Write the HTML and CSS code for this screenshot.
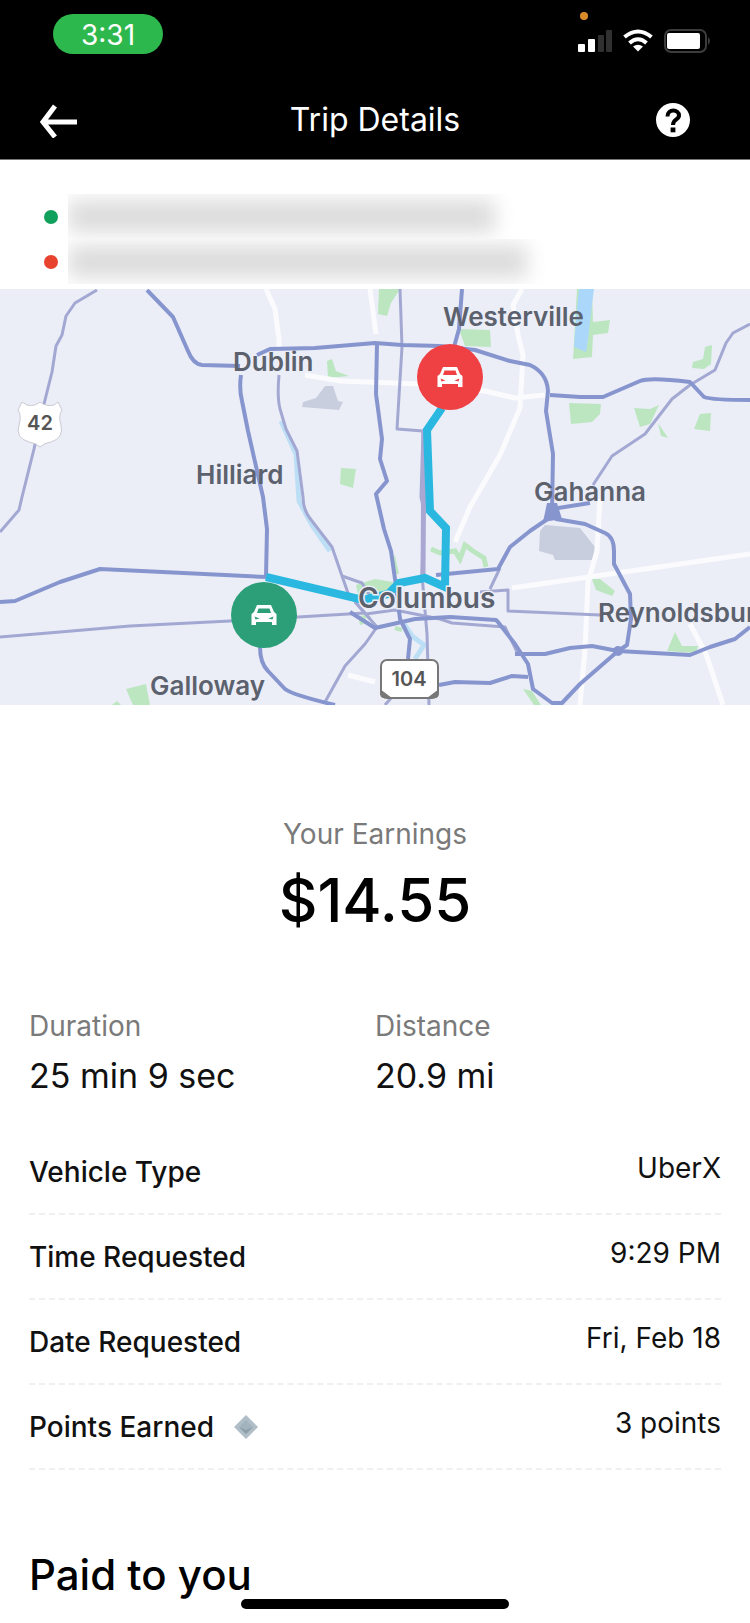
FILE: index.html
```html
<!DOCTYPE html>
<html lang="en">
<head>
<meta charset="UTF-8">
<meta name="viewport" content="width=device-width, initial-scale=1.0">
<title>Trip Details</title>
<link rel="stylesheet" href="styles.css">
</head>
<body>
<header class="top">
    <div class="status-bar">
        <span class="clock">3:31</span>
        <svg class="status-icons" width="138" height="46" viewBox="0 0 138 46" aria-hidden="true">
            <circle cx="9" cy="8" r="4" fill="#d98a2b"/>
            <g fill="#fff">
                <rect x="3" y="36" width="7" height="8" rx="1"/>
                <rect x="13" y="31" width="7" height="13" rx="1"/>
            </g>
            <g fill="#303030">
                <rect x="23" y="27" width="6" height="17" rx="1"/>
                <rect x="31" y="22" width="6" height="22" rx="1"/>
            </g>
            <g fill="none" stroke="#fff" stroke-width="4">
                <path d="M49.500 29Q63 18 76.500 29"/>
                <path d="M54.500 35Q63 27.500 71.500 35"/>
            </g>
            <path d="M58 38.500Q63 35 68 38.500L63 43.500Z" fill="#fff"/>
            <rect x="90" y="22" width="41" height="22" rx="6" fill="none" stroke="#3c3c3c" stroke-width="2"/>
            <rect x="92" y="25" width="33" height="16" rx="2" fill="#fff"/>
            <path d="M133 29q4 4 0 8z" fill="#3c3c3c"/>
        </svg>
    </div>
    <div class="nav-bar">
        <button type="button" class="icon-btn" aria-label="Back">
            <svg width="40" height="36" viewBox="0 0 40 36"><path d="M39 20H5M17 4L5 20L17 35" fill="none" stroke="#fff" stroke-width="5"/></svg>
        </button>
        <h1>Trip Details</h1>
        <button type="button" class="icon-btn help" aria-label="Help">
            <svg width="34" height="34" viewBox="0 0 34 34">
                <circle cx="17" cy="17" r="17" fill="#fff"/>
                <path d="M11.500 13.500C11.500 5.500 23 6 23 12.500C23 17 17 16 17 22" fill="none" stroke="#000" stroke-width="4"/>
                <rect x="14.600" y="24.500" width="4.800" height="4.800" fill="#000"/>
            </svg>
        </button>
    </div>
</header>

<ul class="stops">
    <li class="pickup"><span class="address"><span class="redacted short"></span></span></li>
    <li class="dropoff"><span class="address"><span class="redacted"></span></span></li>
</ul>

<svg class="map" viewBox="0 0 750 416" role="img" aria-label="Trip route map">
    <defs>
        <g id="car">
            <path fill="#fff" fill-rule="evenodd" d="M-7 -10H7L10 -3L12.500 -1V10H8V7H-8V10H-12.500V-1L-10 -3ZM-5.500 -6.500L-7 -2H7L5.500 -6.500ZM-9.500 1.500L-8.500 4.500L-4.500 3.500ZM9.500 1.500L8.500 4.500L4.500 3.500Z"/>
        </g>
    </defs>
    <rect width="750" height="416" fill="#ebeef7"/>

    <!-- parks -->
    <g fill="#bce6c0">
        <path d="M379 0H400L391 14L387 27L378 25Z"/>
        <path d="M327 72L332 70L336 82L349 87L328 89Z"/>
        <path d="M341 179L356 180L353 199L340 195Z"/>
        <path d="M459 40L490 41L491 58L465 57Z"/>
        <path d="M577 0H592L593 33L610 31L608 44L593 46L592 68L573 70Z"/>
        <path d="M569 114L601 115L600 125L592 133L571 135Z"/>
        <path d="M634 119L650 120L659 116L650 135L640 138Z"/>
        <path d="M658 134L668 149L661 147Z"/>
        <path d="M705 58L712 56L711 75L704 80L692 79L693 73L703 70Z"/>
        <path d="M700 125L711 124L710 142L694 140Z"/>
        <path d="M592 290L600 290L615 302L612 307L596 301Z"/>
        <path d="M667 362L675 343L682 357L698 357L696 364Z"/>
        <path d="M523 400L532 402L541 416H534Z"/>
        <path d="M126 400L146 395L150 416H133Z"/>
        <path d="M112 416L117 412L121 416Z"/>
        <path d="M356 296L375 290L393 293L391 303L358 306Z"/>
        <path d="M358 327L366 326L366 334L360 336Z"/>
    </g>
    <path d="M431 260L440 264L455 262L460 270L465 256L473 262L484 269L486 278" fill="none" stroke="#bce6c0" stroke-width="5"/>
    <path d="M393 267L397 285M395 339L402 341" fill="none" stroke="#bce6c0" stroke-width="4"/>

    <!-- airports -->
    <g fill="#c9cede">
        <path d="M325 97H333L338 112L343 113L339 121L302 118L303 113L316 109Z"/>
        <path d="M540 242L545 236L580 239L595 258L593 271H555L553 266L539 262Z"/>
    </g>

    <!-- water -->
    <path d="M579 0H594L592 15L588 50L586 63L574 58L577 20Z" fill="#abd8fa"/>
    <g fill="none" stroke="#bddff5" stroke-width="5" stroke-linejoin="round">
        <path d="M281 132L296 165L299 212L312 236L330 262"/>
        <path d="M404 335L412 347L424 356L415 370"/>
    </g>

    <!-- minor roads -->
    <g fill="none" stroke="#fbfbfe" stroke-width="5" stroke-linejoin="round">
        <path d="M266 0L275 20L279 50V60M305 86L340 92L420 95L485 102L515 109L545 106"/>
        <path d="M370 0L376 45M522 0L513 16L518 46L523 66L520 119L500 166L470 218L455 253"/>
        <path d="M512 299L750 265M600 210L597 262L588 293L585 360L580 416"/>
        <path d="M690 335L706 365L723 416M348 386L375 393"/>
    </g>

    <!-- secondary roads -->
    <g fill="none" stroke="#a3a8d3" stroke-width="3" stroke-linejoin="round">
        <path d="M97 1L75 14L66 27L62 46L56 57L52 83L44 115L34 160L22 208L19 221L0 243"/>
        <path d="M0 348L60 343L130 337L230 332L298 328L365 324"/>
        <path d="M279 86Q277 108 280 120L286 140L297 162L303 208Q303 222 312 232L332 258L342 287L348 304L370 330"/>
        <path d="M342 287L362 294L372 310M355 313L377 338"/>
        <path d="M400 0L402 58L397 140L423 142L421 208L424 222L422 286L427 345L429 416"/>
        <path d="M750 35L733 44L726 54L715 81L690 96L672 110L645 145L612 167L593 196"/>
        <path d="M480 303L508 301V322L600 326M490 300L500 279M366 325L395 321L440 330L452 334L505 338L518 365"/>
        <path d="M325 413L345 377L365 355L377 338M385 416L392 408"/>
    </g>
    <path d="M424 142L423 286" fill="none" stroke="#aaa8d2" stroke-width="5"/>

    <!-- highways -->
    <g fill="none" stroke="#8795cf" stroke-width="4" stroke-linejoin="round">
        <path d="M147 1L173 28L188 62Q193 75 202 76L240 77M257 66L270 60L315 59L375 54L402 56L440 57L475 61L510 72L530 76Q547 84 548 102L546 122L553 165L552 224"/>
        <path d="M241 86Q239 100 242 112L248 142L263 208L267 240L266 288M0 313L15 312L60 293L100 280L266 288"/>
        <path d="M377 55L376 105L382 150L380 170L387 192L376 205L384 240L391 262L395 290L400 330L410 350L408 370"/>
        <path d="M462 0L459 40L454 58M550 106L580 108H603L640 92Q650 88 690 93L704 108Q712 111 750 111"/>
        <path d="M436 286L498 280L510 258L530 242L552 227L556 230L585 235L605 244Q614 248 614 262V275L630 305L631 330L627 356L618 362L580 395L562 414H552L533 400L528 375L515 355L498 333L496 331L450 328L415 330L375 339L350 323"/>
        <path d="M515 365H545L570 359L592 357L618 362L690 366L710 358L735 350L750 338M552 220L590 214"/>
        <path d="M439 396L455 393L490 394L512 387L528 388M260 358Q260 374 268 382L285 400Q293 406 335 416"/>
    </g>
    <path d="M547 214H557L562 230L543 233Z" fill="#8795cf"/>
    <circle cx="618" cy="362" r="5" fill="#8795cf"/>

    <!-- route -->
    <path d="M442 119L427 141L430 222L446 239L445 298L425 289L399 294L388 305L363 311L266 288" fill="none" stroke="#2bb8e0" stroke-width="8"/>

    <!-- shields -->
    <path d="M22 113L27 116Q34 118 40 113Q46 118 54 116L58 113L62 121Q58 127 61 136Q64 149 51 153Q44 154 40 158Q36 154 29 153Q15 149 19 136Q22 127 18 121Z" fill="#fff" stroke="#c9c9d2" stroke-width="1"/>
    <rect x="381" y="371" width="57" height="38" rx="6" fill="#fff" stroke="#777" stroke-width="2"/>
    <path d="M380 400L392 409H384Q380 409 380 404ZM439 400L427 409H435Q439 409 439 404Z" fill="#777"/>

    <g class="map-labels">
        <text x="443" y="37">Westerville</text>
        <text x="233" y="82">Dublin</text>
        <text x="196" y="195">Hilliard</text>
        <text x="534" y="212">Gahanna</text>
        <text x="358" y="319" class="city">Columbus</text>
        <text x="598" y="333">Reynoldsbur</text>
        <text x="150" y="406">Galloway</text>
        <text x="40" y="141" class="shield">42</text>
        <text x="409" y="397" class="shield">104</text>
    </g>

    <circle cx="450" cy="88" r="33" fill="#ef4043"/>
    <use href="#car" x="450" y="88"/>
    <circle cx="264" cy="326" r="33" fill="#2c9f78"/>
    <use href="#car" x="264" y="326"/>
</svg>

<main>
    <section class="earnings">
        <h2>Your Earnings</h2>
        <p class="amount">$14.55</p>
    </section>

    <dl class="stats">
        <div>
            <dt>Duration</dt>
            <dd>25 min 9 sec</dd>
        </div>
        <div>
            <dt>Distance</dt>
            <dd>20.9 mi</dd>
        </div>
    </dl>

    <dl class="details">
        <div class="row">
            <dt>Vehicle Type</dt>
            <dd>UberX</dd>
        </div>
        <div class="row">
            <dt>Time Requested</dt>
            <dd>9:29 PM</dd>
        </div>
        <div class="row">
            <dt>Date Requested</dt>
            <dd>Fri, Feb 18</dd>
        </div>
        <div class="row">
            <dt>Points Earned
                <svg width="24" height="24" viewBox="0 0 24 24" aria-hidden="true">
                    <path d="M12 0L24 12L12 24L0 12Z" fill="#b0bec8"/>
                    <path d="M12 5L19 12L12 19L5 12Z" fill="#a3b3be"/>
                    <path d="M19 12L12 19L5 12L12 15Z" fill="#8c9faa"/>
                </svg>
            </dt>
            <dd>3 points</dd>
        </div>
    </dl>

    <h2 class="paid">Paid to you</h2>
</main>
<div class="home-indicator"></div>
</body>
</html>
```

FILE: styles.css
```css
* {
    box-sizing: border-box;
}

body {
    margin: 0;
    font-family: Inter, "Liberation Sans", sans-serif;
    font-size: 28px;
    line-height: 36px;
    color: #111;
    background-color: #fff;
}

h1, h2, p, dl, dd, ul {
    margin: 0;
    padding: 0;
    font-weight: 400;
}

.top {
    background-color: #000;
    color: #fff;
    border-bottom: 1px solid #777;
}

.status-bar {
    display: flex;
    justify-content: space-between;
    align-items: flex-start;
    padding: 8px 37px 0 53px;
}

.clock {
    width: 110px;
    height: 40px;
    margin-top: 6px;
    border-radius: 20px;
    background-color: #2db84d;
    font-size: 28px;
    line-height: 42px;
    text-align: center;
}

.nav-bar {
    display: grid;
    grid-template-columns: 60px 1fr 60px;
    align-items: center;
    height: 105px;
    padding: 26px 38px 0;
}

.nav-bar h1 {
    font-size: 32px;
    font-weight: 400;
    text-align: center;
}

.icon-btn {
    display: flex;
    padding: 0;
    border: 0;
    background: none;
}

.help {
    padding-left: 4px;
}

.stops {
    list-style: none;
    padding: 34px 44px 5px;
}

.stops li {
    display: flex;
    align-items: center;
    gap: 10px;
    height: 45px;
}

.stops li::before {
    content: "";
    width: 14px;
    height: 14px;
    border-radius: 50%;
    background-color: #12a15c;
}

.stops .dropoff::before {
    background-color: #e8432f;
}

.address {
    flex: 1;
    overflow: hidden;
    padding: 6px 0;
}

.redacted {
    display: block;
    width: 72%;
    height: 33px;
    background-color: #dcdcdc;
    filter: blur(10px);
}

.redacted.short {
    width: 67%;
}

.map {
    display: block;
    width: 100%;
}

.map-labels {
    font-family: Inter, sans-serif;
    font-size: 26px;
    font-weight: 600;
    fill: #5c616e;
}

.map-labels .city {
    font-size: 28px;
    stroke: #ebeef7;
    stroke-width: 3px;
    paint-order: stroke;
}

.map-labels .shield {
    font-size: 20px;
    text-anchor: middle;
    fill: #555;
}

main {
    padding: 111px 29px 0;
}

.earnings {
    text-align: center;
}

.earnings h2,
.stats dt {
    font-size: 28px;
    color: #7a7a7a;
}

.amount {
    margin-top: 12px;
    font-size: 60px;
    font-weight: 500;
    line-height: 72px;
    color: #000;
}

.stats {
    display: grid;
    grid-template-columns: 1fr 1fr;
    margin-top: 72px;
}

.stats dd {
    margin-top: 10px;
    font-size: 34px;
    line-height: 44px;
}

.details {
    margin-top: 32px;
}

.row {
    display: flex;
    justify-content: space-between;
    align-items: center;
    height: 85px;
    border-bottom: 2px dashed #f0f0f0;
}

.row dt {
    display: flex;
    align-items: center;
    gap: 20px;
    font-weight: 500;
}

.row dd {
    padding-bottom: 8px;
}

.paid {
    margin-top: 79px;
    font-size: 42px;
    font-weight: 500;
    line-height: 52px;
    color: #000;
}

.home-indicator {
    position: fixed;
    bottom: 14px;
    left: 50%;
    width: 268px;
    height: 10px;
    margin-left: -134px;
    border-radius: 5px;
    background-color: #000;
}
```
